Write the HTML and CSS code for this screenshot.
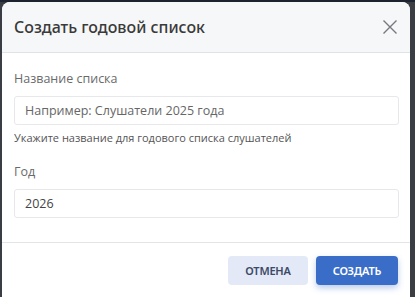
FILE: index.html
```html
<!DOCTYPE html>
<html lang="ru">
<head>
  <meta charset="UTF-8">
  <title>Создать годовой список</title>
  <link rel="stylesheet" href="styles.css">
</head>
<body>
  <div class="dialog">
    <header class="dialog-header">
      <h1 class="dialog-title">Создать годовой список</h1>
      <button class="close-btn" title="Закрыть">
        <svg width="14" height="14" viewBox="0 0 14 14"><path d="M0.5 0.5 L13.5 13.5 M13.5 0.5 L0.5 13.5" stroke="#75787e" stroke-width="1.4" fill="none"/></svg>
      </button>
    </header>
    <div class="dialog-body">
      <div class="field">
        <label class="field-label">Название списка</label>
        <input class="field-input" type="text" placeholder="Например: Слушатели 2025 года">
        <div class="field-hint">Укажите название для годового списка слушателей</div>
      </div>
      <div class="field">
        <label class="field-label">Год</label>
        <input class="field-input" type="text" value="2026">
      </div>
    </div>
    <footer class="dialog-footer">
      <button class="btn btn-cancel">Отмена</button>
      <button class="btn btn-primary">Создать</button>
    </footer>
  </div>
</body>
</html>
```

FILE: styles.css
```css
body { margin: 0; background: #3a3d44; font-family: "Open Sans", "Noto Sans", sans-serif; color: #333; height: 297px; overflow: hidden; border-top: 2px solid #1c2230; box-sizing: border-box; }
.dialog { margin-left: 2px; width: 408px; height: 310px; background: #fff; border-radius: 8px 8px 0 0; overflow: hidden; display: flex; flex-direction: column; }
.dialog-header { background: #f6f7f9; border-bottom: 1px solid #dfe2e6; height: 50px; display: flex; align-items: center; padding: 0 12px 0 12px; }
.dialog-title { margin: 0; font-family: "Noto Sans", sans-serif; font-size: 16px; font-weight: 500; color: #3a3a3a; flex: 1; }
.close-btn { background: none; border: none; padding: 0; width: 20px; height: 20px; display: flex; align-items: center; justify-content: center; cursor: pointer; margin-right: -2px; }
.dialog-body { padding: 17px 12px 0 12px; height: 190px; box-sizing: border-box; border-bottom: 1px solid #e2e4e8; }
.field { display: flex; flex-direction: column; margin-bottom: 18px; }
.field-label { font-size: 12.5px; color: #6a6a6a; line-height: 18px; margin-bottom: 8px; }
.field-input { height: 29px; box-sizing: border-box; border: 1px solid #e6e8ec; border-radius: 3px; padding: 0 10px; font-family: "Open Sans", "Noto Sans", sans-serif; font-size: 12.5px; color: #444; outline: none; width: 385px; }
.field-input::placeholder { color: #666; }
.field-hint { font-size: 11px; color: #555; margin-top: 5px; line-height: 15px; }
.dialog-footer { display: flex; justify-content: flex-end; gap: 8px; padding: 13px 12px 0 0; }
.btn { height: 29px; border: none; border-radius: 4px; font-family: "Noto Sans", sans-serif; font-size: 11px; font-weight: 600; text-transform: uppercase; letter-spacing: -0.2px; cursor: pointer; }
.btn-cancel { width: 80px; background: #e3e9f6; color: #3b4a66; }
.btn-primary { width: 82px; background: #3a6dc8; color: #fff; box-shadow: 0 3px 6px rgba(58, 109, 200, 0.35); }
```
